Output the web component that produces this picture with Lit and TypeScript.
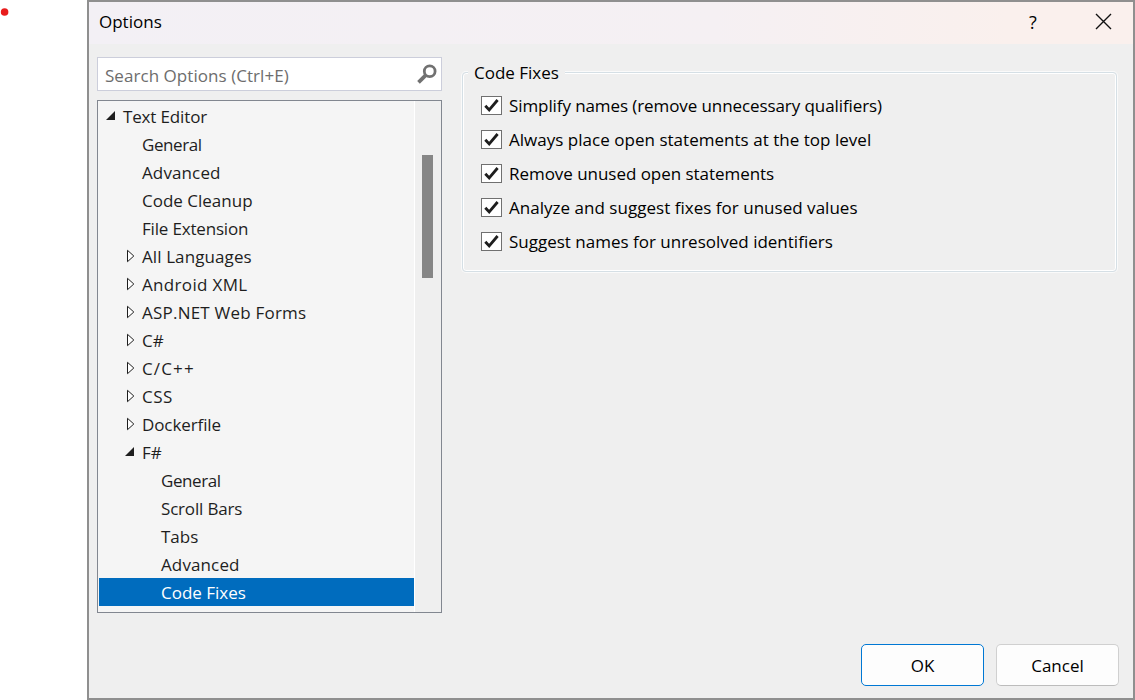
import { LitElement, html, css, svg } from "lit";
import { customElement } from "lit/decorators.js";
import { classMap } from "lit/directives/class-map.js";
import { styleMap } from "lit/directives/style-map.js";

type Node = {
  label: string;
  level: number;
  tracking?: number;
  state?: "open" | "closed";
  selected?: boolean;
};

const nodes: Node[] = [
  { label: "Text Editor", level: 0, state: "open", tracking: -0.15 },
  { label: "General", level: 1, tracking: -0.43 },
  { label: "Advanced", level: 1, tracking: 0.12 },
  { label: "Code Cleanup", level: 1 },
  { label: "File Extension", level: 1, tracking: -0.18 },
  { label: "All Languages", level: 1, state: "closed", tracking: 0.1 },
  { label: "Android XML", level: 1, state: "closed", tracking: 0.33 },
  { label: "ASP.NET Web Forms", level: 1, state: "closed", tracking: 0.22 },
  { label: "C#", level: 1, state: "closed" },
  { label: "C/C++", level: 1, state: "closed", tracking: 1.15 },
  { label: "CSS", level: 1, state: "closed", tracking: 0.5 },
  { label: "Dockerfile", level: 1, state: "closed", tracking: -0.1 },
  { label: "F#", level: 1, state: "open" },
  { label: "General", level: 2, tracking: -0.43 },
  { label: "Scroll Bars", level: 2, tracking: -0.18 },
  { label: "Tabs", level: 2 },
  { label: "Advanced", level: 2, tracking: 0.12 },
  { label: "Code Fixes", level: 2, selected: true },
];

const fixes: { label: string; tracking: number }[] = [
  { label: "Simplify names (remove unnecessary qualifiers)", tracking: -0.09 },
  { label: "Always place open statements at the top level", tracking: 0.025 },
  { label: "Remove unused open statements", tracking: -0.04 },
  { label: "Analyze and suggest fixes for unused values", tracking: 0.025 },
  { label: "Suggest names for unresolved identifiers", tracking: 0 },
];

@customElement("app-root")
export class AppRoot extends LitElement {
  static styles = css`
    :host {
      display: flex;
      width: 1135px;
      height: 700px;
      background: #fff;
      overflow: hidden;
      font: 17px/24px "Open Sans", "Noto Sans", sans-serif;
      color: #000;
      white-space: nowrap;
    }
    * { box-sizing: border-box; }
    svg { display: block; flex: none; }
    .margin { width: 87px; flex: none; padding-top: 8px; }
    .dialog {
      flex: 1;
      display: flex;
      flex-direction: column;
      border: 2px solid #8f8f8f;
      background: #efefef;
    }
    .titlebar {
      height: 42px;
      flex: none;
      display: flex;
      align-items: center;
      padding: 0 21px 3px 10px;
      background: linear-gradient(90deg, #f3f0f5, #f5f0f3 60%, #faf0ed 88%, #faf0ed);
    }
    .title { flex: 1; }
    .help { width: 10px; margin-right: 56px; font-size: 18px; }
    .body { flex: 1; display: flex; padding: 13px 16px 0 8px; gap: 20px; }
    .nav { width: 345px; flex: none; }
    .search {
      height: 34px;
      display: flex;
      align-items: center;
      justify-content: space-between;
      padding: 1px 3px 0 7px;
      border: 1px solid #cccedb;
      background: #fff;
      color: #6d6d6d;
      letter-spacing: 0.05px;
    }
    .tree {
      height: 513px;
      margin-top: 9px;
      display: flex;
      border: 1px solid #828790;
      background: #f5f5f5;
      color: #1e1e1e;
    }
    .rows { flex: 1; padding: 1px 0 0 1px; border-right: 1px solid #fff; }
    .row { height: 28px; display: flex; align-items: center; padding-left: 5px; }
    .level1 { padding-left: 24px; }
    .level2 { padding-left: 43px; }
    .row svg { margin-right: 5px; }
    .gap { width: 19px; }
    .selected { background: #006cbe; color: #fff; }
    .scroll { width: 26px; padding: 54px 0 0 7px; background: #efefef; }
    .thumb { width: 11px; height: 123px; background: #868686; }
    .group {
      flex: 1;
      min-width: 0;
      height: 200px;
      margin: 15px 0 0;
      padding: 17px 0 0 18px;
      border: 1px solid #d5dfe5;
      border-radius: 4px;
      box-shadow: 0 0 0 1px #fafafa, inset 0 0 0 1px #fff;
    }
    .legend {
      width: max-content;
      margin: -29px 0 3px -13px;
      padding: 0 6px;
      background: #efefef;
    }
    .check { height: 34px; display: flex; align-items: center; gap: 7px; }
    .footer { display: flex; justify-content: flex-end; gap: 12px; padding: 0 14px 12px 0; }
    .button {
      width: 123px;
      height: 42px;
      display: flex;
      align-items: center;
      justify-content: center;
      padding-top: 2px;
      border: 1px solid #d0d0d0;
      border-bottom-color: #bcbcbc;
      border-radius: 5px;
      background: #fdfdfd;
    }
    .primary { border-color: #0078d4; }
    .text { display: block; padding-top: 2px; }
  `;

  private text(label: string, tracking = 0) {
    return html`<span class="text" style=${styleMap({ letterSpacing: `${tracking}px` })}>${label}</span>`;
  }

  private arrow(state: Node["state"]) {
    return html`<svg width="14" height="16" viewBox="0 0 14 16">${
      state === "open"
        ? svg`<path d="M11 3v9H2z" fill="#1e1e1e"/>`
        : svg`<path d="M4.5 2.3v11.4L10.8 8z" fill="#fff" stroke="#1e1e1e"/>`
    }</svg>`;
  }

  private row(n: Node) {
    return html`<div class=${classMap({ row: true, ["level" + n.level]: true, selected: !!n.selected })}>
      ${n.state ? this.arrow(n.state) : html`<span class="gap"></span>`}${this.text(n.label, n.tracking)}
    </div>`;
  }

  private check(label: string, tracking: number) {
    return html`<div class="check">
      <svg width="21" height="19" viewBox="0 0 21 19">
        <rect x=".5" y=".5" width="20" height="18" fill="#fff" stroke="#707070" />
        <path d="M4.3 9.8 8.2 14 16.6 4" fill="none" stroke="#1e1e1e" stroke-width="2.8" />
      </svg>
      ${this.text(label, tracking)}
    </div>`;
  }

  render() {
    return html`
      <div class="margin">
        <svg width="9" height="9" viewBox="0 0 9 9"><circle cx="4.6" cy="4" r="3.8" fill="#e81c1c" /></svg>
      </div>
      <div class="dialog">
        <div class="titlebar">
          <span class="title">Options</span>
          <span class="help">?</span>
          <svg width="17" height="17" viewBox="0 0 17 17">
            <path d="M1 1l15 15M16 1 1 16" fill="none" stroke="#111" stroke-width="1.4" />
          </svg>
        </div>
        <div class="body">
          <div class="nav">
            <div class="search">
              ${this.text("Search Options (Ctrl+E)", 0.05)}
              <svg width="22" height="22" viewBox="0 0 22 22">
                <circle cx="13.7" cy="7.2" r="5.4" fill="none" stroke="#717171" stroke-width="2.8" />
                <path d="M9.8 11.1 2.5 18.4" stroke="#717171" stroke-width="3.8" />
              </svg>
            </div>
            <div class="tree">
              <div class="rows">${nodes.map((n) => this.row(n))}</div>
              <div class="scroll"><div class="thumb"></div></div>
            </div>
          </div>
          <div class="group">
            <div class="legend">Code Fixes</div>
            ${fixes.map((f) => this.check(f.label, f.tracking))}
          </div>
        </div>
        <div class="footer">
          <div class="button primary">OK</div>
          <div class="button">Cancel</div>
        </div>
      </div>
    `;
  }
}
